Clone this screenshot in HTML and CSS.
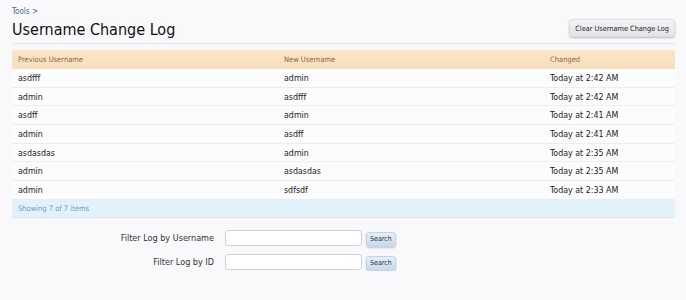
FILE: index.html
```html
<!DOCTYPE html>
<html lang="en">
<head>
<meta charset="UTF-8">
<title>Username Change Log</title>
<link rel="stylesheet" href="styles.css">
</head>
<body>
<div class="page">
    <div class="breadcrumb"><a href="#">Tools</a> &gt;</div>
    <div class="title-bar">
        <h1>Username Change Log</h1>
        <button class="clear-btn">Clear Username Change Log</button>
    </div>

    <table class="log-table">
        <thead>
            <tr>
                <th>Previous Username</th>
                <th>New Username</th>
                <th>Changed</th>
            </tr>
        </thead>
        <tbody>
            <tr><td>asdfff</td><td>admin</td><td>Today at 2:42 AM</td></tr>
            <tr><td>admin</td><td>asdfff</td><td>Today at 2:42 AM</td></tr>
            <tr><td>asdff</td><td>admin</td><td>Today at 2:41 AM</td></tr>
            <tr><td>admin</td><td>asdff</td><td>Today at 2:41 AM</td></tr>
            <tr><td>asdasdas</td><td>admin</td><td>Today at 2:35 AM</td></tr>
            <tr><td>admin</td><td>asdasdas</td><td>Today at 2:35 AM</td></tr>
            <tr><td>admin</td><td>sdfsdf</td><td>Today at 2:33 AM</td></tr>
        </tbody>
    </table>
    <div class="table-footer">Showing 7 of 7 items</div>

    <form class="filter-form">
        <label for="f-user">Filter Log by Username</label>
        <div class="filter-field">
            <input type="text" id="f-user">
            <button type="button" class="search-btn">Search</button>
        </div>
        <label for="f-id">Filter Log by ID</label>
        <div class="filter-field">
            <input type="text" id="f-id">
            <button type="button" class="search-btn">Search</button>
        </div>
    </form>
</div>
</body>
</html>
```

FILE: styles.css
```css
body {
    margin: 0;
    padding: 0;
    background: #f9f9fb;
    font-family: "DejaVu Sans Condensed", "DejaVu Sans", sans-serif;
    color: #222;
}
.page {
    padding: 7px 11px 0 12px;
}
.breadcrumb {
    font-size: 8px;
    color: #555;
    height: 12px;
}
.breadcrumb a {
    color: #3b6e99;
    text-decoration: none;
}
.title-bar {
    display: flex;
    align-items: flex-start;
    justify-content: space-between;
    border-bottom: 1px solid #e6e6ec;
    padding-bottom: 2px;
    margin-bottom: 6px;
}
h1 {
    margin: 0;
    font-size: 16px;
    font-weight: normal;
    color: #111;
    line-height: 22px;
}
.clear-btn {
    font-family: inherit;
    font-size: 7.3px;
    color: #222;
    background: linear-gradient(#f4f4f6, #e4e4e8);
    border: 1px solid #dcdce2;
    border-radius: 4px;
    box-shadow: 0 1px 2px rgba(0, 0, 0, 0.25);
    padding: 3px 5px;
    height: 18px;
}
.log-table {
    width: 100%;
    border-collapse: collapse;
    font-size: 8.8px;
}
.log-table th {
    background: linear-gradient(#fbe7cb, #f8ddb8);
    color: #8a6a3e;
    font-size: 7.5px;
    font-weight: normal;
    text-align: left;
    height: 19px;
    padding: 0 6px;
}
.log-table td {
    height: 17.7px;
    padding: 0 6px;
    border-bottom: 1px solid #e7eff6;
    background: #fcfcfd;
}
.log-table th:nth-child(1), .log-table td:nth-child(1) { width: 254px; }
.log-table th:nth-child(2), .log-table td:nth-child(2) { width: 254px; }
.table-footer {
    background: #e3f1fb;
    border-bottom: 1px solid #d4e6f3;
    color: #6a9fc4;
    font-size: 7.5px;
    height: 17px;
    line-height: 17px;
    padding: 0 6px;
}
.filter-form {
    display: grid;
    grid-template-columns: 202px auto;
    column-gap: 11px;
    row-gap: 7px;
    align-items: center;
    margin-top: 12px;
    font-size: 9px;
}
.filter-form label {
    text-align: right;
    color: #333;
}
.filter-field {
    display: flex;
    align-items: center;
    gap: 4px;
}
.filter-field input {
    width: 129px;
    height: 12px;
    border: 1px solid #d0d0d6;
    border-radius: 3px;
    background: #fff;
    padding: 1px 3px;
}
.search-btn {
    font-family: inherit;
    font-size: 7px;
    color: #333;
    background: linear-gradient(#e4eef8, #c6daec);
    border: 1px solid #c2d4e6;
    border-radius: 3px;
    box-shadow: 0 1px 2px rgba(0, 0, 0, 0.2);
    padding: 0 3px;
    height: 15px;
    margin-top: 2px;
}
```
